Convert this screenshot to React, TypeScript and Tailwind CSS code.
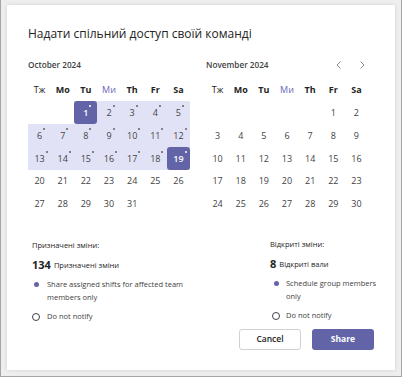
const font = { fontFamily: '"Open Sans", "Noto Sans", sans-serif' };

type Cell = { d?: number; dot?: boolean; band?: boolean; sel?: boolean };

const DayHeads = () => (
  <>
    <div className="flex items-center justify-center text-[9px] text-[#1a1a1a]">Тж</div>
    <div className="flex items-center justify-center text-[9px] font-bold text-[#242424]">Mo</div>
    <div className="flex items-center justify-center text-[9px] font-bold text-[#242424]">Tu</div>
    <div className="flex items-center justify-center text-[9px] text-[#6a6ab8]">Ми</div>
    <div className="flex items-center justify-center text-[9px] font-bold text-[#242424]">Th</div>
    <div className="flex items-center justify-center text-[9px] font-bold text-[#242424]">Fr</div>
    <div className="flex items-center justify-center text-[9px] font-bold text-[#242424]">Sa</div>
  </>
);

const Day = ({ c }: { c: Cell }) => {
  let cls = "flex items-center justify-center text-[9px] text-[#424242]";
  if (c.band) cls += " bg-[#e2e2f6]";
  if (c.sel) cls = "flex items-center justify-center text-[9px] text-white font-semibold bg-[#6264a7] rounded-[3px]";
  return (
    <div className={c.sel ? "bg-[#e2e2f6]" : ""}>
      <div className={cls + " h-full"}>
        {c.d && (
          <span className="relative">
            {c.d}
            {c.dot && (
              <span
                className={
                  "absolute -top-[1px] -right-[3px] w-[2px] h-[2px] rounded-full " +
                  (c.sel ? "bg-white" : "bg-[#616161]")
                }
              />
            )}
          </span>
        )}
      </div>
    </div>
  );
};

const buildMonth = (offset: number, days: number, sel: number[], bandTo: number) => {
  const cells: Cell[] = [];
  for (let i = 0; i < offset; i++) cells.push({});
  for (let d = 1; d <= days; d++) {
    const inBand = bandTo > 0 && d <= bandTo;
    cells.push({ d, dot: inBand, band: inBand, sel: sel.includes(d) });
  }
  while (cells.length % 7) cells.push({});
  return cells;
};

const Month = ({ cells }: { cells: Cell[] }) => (
  <div className="grid grid-cols-7 w-[162px] auto-rows-[22.8px] mt-[6.6px]">
    <DayHeads />
    {cells.map((c, i) => (
      <Day key={i} c={c} />
    ))}
  </div>
);

const Radio = ({ on }: { on: boolean }) =>
  on ? (
    <span className="w-[8px] h-[8px] flex items-center justify-center">
      <span className="w-[5px] h-[5px] rounded-full bg-[#6264a7]" />
    </span>
  ) : (
    <span className="w-[8px] h-[8px] rounded-full border border-[#424242]" />
  );

export default function App() {
  const oct = buildMonth(2, 31, [1, 19], 19);
  const nov = buildMonth(5, 30, [], 0);
  return (
    <div
      className="w-[402px] h-[377px] bg-[#eeeeee] border-l border-r border-b border-[#a5a5a5] pl-[6px] pt-[5px]"
      style={font}
    >
      <div className="w-[388px] h-[365px] bg-white shadow-[0_0_4px_rgba(0,0,0,0.12)] pt-[21px] pl-[21px] pr-[21px]">
        <h2 className="text-[12px] leading-[16px] text-[#242424]">Надати спільний доступ своїй команді</h2>

        <div className="flex gap-[16px] mt-[16px]">
          <div>
            <div className="h-[14px] flex items-center text-[8.2px] font-semibold text-[#424242]">October 2024</div>
            <Month cells={oct} />
          </div>
          <div>
            <div className="h-[14px] flex items-center justify-between text-[8.2px] font-semibold text-[#424242]">
              <span>November 2024</span>
              <span className="flex items-center gap-[11px]">
                <svg width="12" height="12" viewBox="0 0 12 12" fill="none" stroke="#8a8a8a" strokeWidth="1">
                  <path d="M7.5 2.5 L4 6 L7.5 9.5" />
                </svg>
                <svg width="12" height="12" viewBox="0 0 12 12" fill="none" stroke="#8a8a8a" strokeWidth="1">
                  <path d="M4.5 2.5 L8 6 L4.5 9.5" />
                </svg>
              </span>
            </div>
            <Month cells={nov} />
          </div>
        </div>

        <div className="flex mt-[24px] pl-[4px] whitespace-nowrap">
          <div className="w-[238px] shrink-0">
            <div className="h-[12px] flex items-center text-[7.5px] text-[#252424]">Призначені зміни:</div>
            <div className="h-[16px] mt-[6px] flex items-center gap-[3px]">
              <span className="text-[11px] font-bold text-[#242424]">134</span>
              <span className="text-[7.5px] text-[#242424]">Призначені зміни</span>
            </div>
            <div className="flex mt-[5px] text-[7.5px] leading-[12.5px] text-[#424242]">
              <span className="w-[15px] h-[12.5px] flex items-center">
                <Radio on />
              </span>
              <span>
                Share assigned shifts for affected team
                <br />
                members only
              </span>
            </div>
            <div className="flex mt-[7px] text-[7.5px] leading-[12.5px] text-[#424242]">
              <span className="w-[15px] h-[12.5px] flex items-center">
                <Radio on={false} />
              </span>
              <span>Do not notify</span>
            </div>
          </div>
          <div className="-mt-[1px]">
            <div className="h-[12px] flex items-center text-[7.5px] text-[#252424]">Відкриті зміни:</div>
            <div className="h-[16px] mt-[6px] flex items-center gap-[3px]">
              <span className="text-[11px] font-bold text-[#242424]">8</span>
              <span className="text-[7.5px] text-[#242424]">Відкриті вали</span>
            </div>
            <div className="flex mt-[5px] pl-[2px] text-[7.5px] leading-[12.5px] text-[#424242]">
              <span className="w-[14px] h-[12.5px] flex items-center">
                <Radio on />
              </span>
              <span>
                Schedule group members
                <br />
                only
              </span>
            </div>
            <div className="flex mt-[7px] pl-[2px] text-[7.5px] leading-[12.5px] text-[#424242]">
              <span className="w-[14px] h-[12.5px] flex items-center">
                <Radio on={false} />
              </span>
              <span>Do not notify</span>
            </div>
          </div>
        </div>

        <div className="flex justify-end gap-[11px] mt-[6px]">
          <button className="w-[62px] h-[21px] border border-[#d1d1d1] rounded-[3px] bg-white text-[8.5px] font-semibold text-[#242424]">
            Cancel
          </button>
          <button className="w-[62px] h-[21px] rounded-[3px] bg-[#6264a7] text-[8.5px] font-bold text-white">
            Share
          </button>
        </div>
      </div>
    </div>
  );
}
